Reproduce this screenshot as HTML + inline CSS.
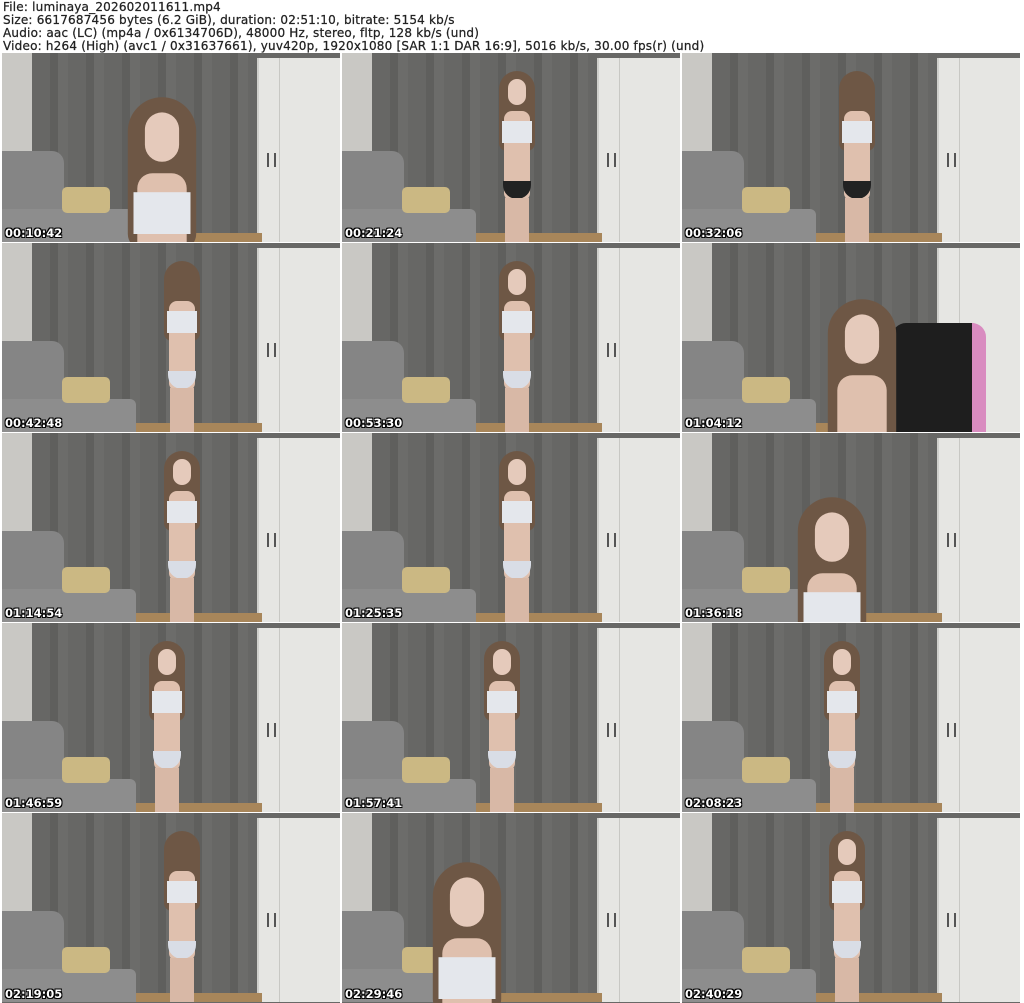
<!DOCTYPE html>
<html><head><meta charset="utf-8"><style>
html,body{margin:0;width:1024px;height:1003px;overflow:hidden}
body{background:#fff;position:relative;font-family:"DejaVu Sans",Verdana,sans-serif}
.hd{position:absolute;left:3px;top:1px;font-size:12px;line-height:13px;color:#222;white-space:pre;letter-spacing:0.2px;-webkit-text-stroke:0.25px #222}
.t{position:absolute;width:338px;height:189px;overflow:hidden;background:#686866}
.t .w{position:absolute;left:0;top:0;width:30px;height:189px;background:#c9c8c4}
.t .c{position:absolute;left:30px;top:0;width:225px;height:189px;background:repeating-linear-gradient(90deg,#676765 0 18px,#5f5f5d 18px 26px,#6c6c6a 26px 36px)}
.t .wd{position:absolute;left:255px;top:5px;width:83px;height:184px;background:#e6e6e3;border-left:2px solid #d0d0cc}
.t .wd:before{content:"";position:absolute;left:20px;top:0;width:1px;height:184px;background:#c8c8c4}
.t .wd:after{content:"";position:absolute;left:8px;top:95px;width:5px;height:14px;border-left:2px solid #555;border-right:2px solid #555}
.t .fl{position:absolute;left:100px;top:180px;width:160px;height:9px;background:#a8865a}
.t .sb{position:absolute;left:0;top:98px;width:62px;height:91px;background:#858585;border-radius:0 12px 0 0}
.t .ss{position:absolute;left:0;top:156px;width:134px;height:33px;background:#8d8d8d;border-radius:0 6px 0 0}
.t .pl{position:absolute;left:60px;top:134px;width:48px;height:26px;background:#cbb883;border-radius:5px}
.f{position:absolute;top:0;width:60px;height:189px}
.f .h{position:absolute;left:12px;top:18px;width:36px;height:80px;background:#6e5745;border-radius:18px 18px 8px 8px}
.f .fc{position:absolute;left:21px;top:26px;width:18px;height:26px;background:#e5cabb;border-radius:9px}
.f .b{position:absolute;left:17px;top:58px;width:26px;height:90px;background:#dfc0ae;border-radius:8px}
.f .tp{position:absolute;left:15px;top:68px;width:30px;height:22px;background:#e4e7ec}
.f .bt{position:absolute;left:16px;top:128px;width:28px;height:18px;background:#d9dde6;border-radius:0 0 14px 14px}
.f .lg{position:absolute;left:18px;top:145px;width:24px;height:44px;background:#d8b8a6}
.f.big{transform:scale(1.9);transform-origin:50% 0}
.ts{position:absolute;left:3px;bottom:2px;color:#fff;font-weight:bold;font-size:11.5px;text-shadow:1px 1px 0 #000,-1px -1px 0 #000,1px -1px 0 #000,-1px 1px 0 #000}
</style></head><body>
<div class="hd">File: luminaya_202602011611.mp4
Size: 6617687456 bytes (6.2 GiB), duration: 02:51:10, bitrate: 5154 kb/s
Audio: aac (LC) (mp4a / 0x6134706D), 48000 Hz, stereo, fltp, 128 kb/s (und)
Video: h264 (High) (avc1 / 0x31637661), yuv420p, 1920x1080 [SAR 1:1 DAR 16:9], 5016 kb/s, 30.00 fps(r) (und)</div>

<div class="t" style="left:2px;top:53px"><div class="w"></div><div class="c"></div><div class="wd"></div><div class="fl"></div><div class="sb"></div><div class="ss"></div><div class="pl"></div><div class="f big" style="left:130px;top:10px"><div class="h"></div><div class="fc"></div><div class="b"></div><div class="tp"></div></div><div class="ts">00:10:42</div></div>
<div class="t" style="left:342px;top:53px"><div class="w"></div><div class="c"></div><div class="wd"></div><div class="fl"></div><div class="sb"></div><div class="ss"></div><div class="pl"></div><div class="f" style="left:145px"><div class="h"></div><div class="fc"></div><div class="b"></div><div class="tp"></div><div class="bt" style="background:#222"></div><div class="lg"></div></div><div class="ts">00:21:24</div></div>
<div class="t" style="left:682px;top:53px"><div class="w"></div><div class="c"></div><div class="wd"></div><div class="fl"></div><div class="sb"></div><div class="ss"></div><div class="pl"></div><div class="f" style="left:145px"><div class="h"></div><div class="b"></div><div class="tp"></div><div class="bt" style="background:#222"></div><div class="lg"></div></div><div class="ts">00:32:06</div></div>

<div class="t" style="left:2px;top:243px"><div class="w"></div><div class="c"></div><div class="wd"></div><div class="fl"></div><div class="sb"></div><div class="ss"></div><div class="pl"></div><div class="f" style="left:150px"><div class="h"></div><div class="b"></div><div class="tp"></div><div class="bt"></div><div class="lg"></div></div><div class="ts">00:42:48</div></div>
<div class="t" style="left:342px;top:243px"><div class="w"></div><div class="c"></div><div class="wd"></div><div class="fl"></div><div class="sb"></div><div class="ss"></div><div class="pl"></div><div class="f" style="left:145px"><div class="h"></div><div class="fc"></div><div class="b"></div><div class="tp"></div><div class="bt"></div><div class="lg"></div></div><div class="ts">00:53:30</div></div>
<div class="t" style="left:682px;top:243px"><div class="w"></div><div class="c"></div><div class="wd"></div><div class="fl"></div><div class="sb"></div><div class="ss"></div><div class="pl"></div><div style="position:absolute;left:210px;top:80px;width:80px;height:109px;background:#1e1e1e;border-radius:14px 14px 0 0;border-right:14px solid #d98cc0"></div><div class="f big" style="left:150px;top:22px"><div class="h"></div><div class="fc"></div><div class="b"></div></div><div class="ts">01:04:12</div></div>

<div class="t" style="left:2px;top:433px"><div class="w"></div><div class="c"></div><div class="wd"></div><div class="fl"></div><div class="sb"></div><div class="ss"></div><div class="pl"></div><div class="f" style="left:150px"><div class="h"></div><div class="fc"></div><div class="b"></div><div class="tp"></div><div class="bt"></div><div class="lg"></div></div><div class="ts">01:14:54</div></div>
<div class="t" style="left:342px;top:433px"><div class="w"></div><div class="c"></div><div class="wd"></div><div class="fl"></div><div class="sb"></div><div class="ss"></div><div class="pl"></div><div class="f" style="left:145px"><div class="h"></div><div class="fc"></div><div class="b"></div><div class="tp"></div><div class="bt"></div><div class="lg"></div></div><div class="ts">01:25:35</div></div>
<div class="t" style="left:682px;top:433px"><div class="w"></div><div class="c"></div><div class="wd"></div><div class="fl"></div><div class="sb"></div><div class="ss"></div><div class="pl"></div><div class="f big" style="left:120px;top:30px"><div class="h"></div><div class="fc"></div><div class="b"></div><div class="tp"></div></div><div class="ts">01:36:18</div></div>

<div class="t" style="left:2px;top:623px"><div class="w"></div><div class="c"></div><div class="wd"></div><div class="fl"></div><div class="sb"></div><div class="ss"></div><div class="pl"></div><div class="f" style="left:135px"><div class="h"></div><div class="fc"></div><div class="b"></div><div class="tp"></div><div class="bt"></div><div class="lg"></div></div><div class="ts">01:46:59</div></div>
<div class="t" style="left:342px;top:623px"><div class="w"></div><div class="c"></div><div class="wd"></div><div class="fl"></div><div class="sb"></div><div class="ss"></div><div class="pl"></div><div class="f" style="left:130px"><div class="h"></div><div class="fc"></div><div class="b"></div><div class="tp"></div><div class="bt"></div><div class="lg"></div></div><div class="ts">01:57:41</div></div>
<div class="t" style="left:682px;top:623px"><div class="w"></div><div class="c"></div><div class="wd"></div><div class="fl"></div><div class="sb"></div><div class="ss"></div><div class="pl"></div><div class="f" style="left:130px"><div class="h"></div><div class="fc"></div><div class="b"></div><div class="tp"></div><div class="bt"></div><div class="lg"></div></div><div class="ts">02:08:23</div></div>

<div class="t" style="left:2px;top:813px;height:190px"><div class="w"></div><div class="c"></div><div class="wd"></div><div class="fl"></div><div class="sb"></div><div class="ss"></div><div class="pl"></div><div class="f" style="left:150px"><div class="h"></div><div class="b"></div><div class="tp"></div><div class="bt"></div><div class="lg"></div></div><div class="ts">02:19:05</div></div>
<div class="t" style="left:342px;top:813px;height:190px"><div class="w"></div><div class="c"></div><div class="wd"></div><div class="fl"></div><div class="sb"></div><div class="ss"></div><div class="pl"></div><div class="f big" style="left:95px;top:15px"><div class="h"></div><div class="fc"></div><div class="b"></div><div class="tp"></div></div><div class="ts">02:29:46</div></div>
<div class="t" style="left:682px;top:813px;height:190px"><div class="w"></div><div class="c"></div><div class="wd"></div><div class="fl"></div><div class="sb"></div><div class="ss"></div><div class="pl"></div><div class="f" style="left:135px"><div class="h"></div><div class="fc"></div><div class="b"></div><div class="tp"></div><div class="bt"></div><div class="lg"></div></div><div class="ts">02:40:29</div></div>
</body></html>
